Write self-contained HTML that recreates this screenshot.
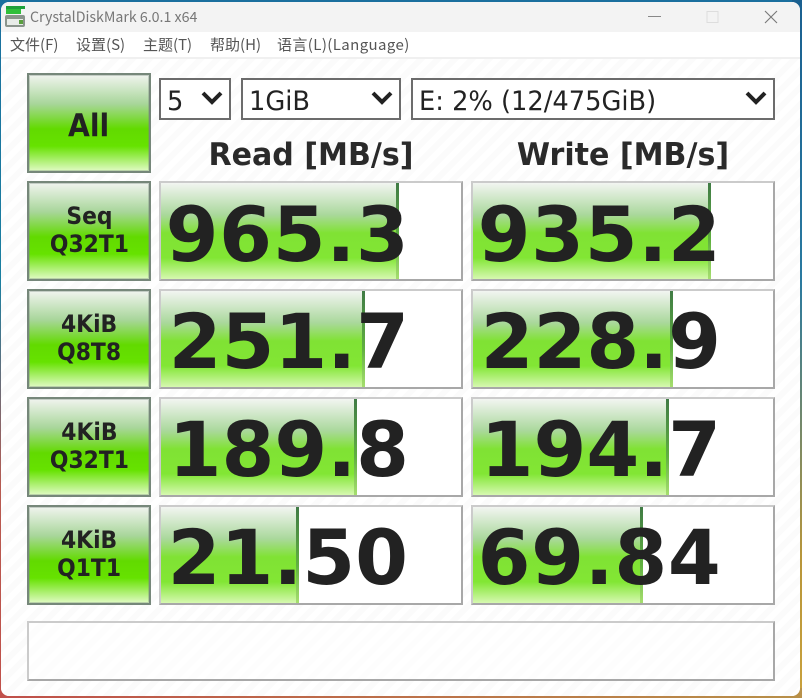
<!DOCTYPE html>
<html><head><meta charset="utf-8"><style>
html,body{margin:0;padding:0}
body{width:802px;height:698px;position:relative;overflow:hidden;background:linear-gradient(180deg,#1a6f9e 0,#1a7fa0 40%,#b85a50 70%,#c0504a 100%)}
#edgeR{position:absolute;right:0;top:0;width:10px;height:698px;background:linear-gradient(180deg,#1a6090 0,#2a7aa0 40%,#b8963a 80%,#c9a13c 100%)}
#edgeB{position:absolute;left:0;bottom:0;width:802px;height:10px;background:linear-gradient(90deg,#c0504a,#b89048)}
#win{position:absolute;left:1px;top:2px;width:799px;height:694px;border-radius:8px;overflow:hidden;background:#fdfdfd}
#tb{position:absolute;left:0;top:0;width:799px;height:30px;background:#f3f3f3}
#title{position:absolute;left:29px;top:5px;font:14.200px/20px "Noto Sans CJK SC","Liberation Sans",sans-serif;color:#777}
#menu{position:absolute;left:0;top:30px;width:799px;height:25px;background:#fff;border-bottom:2px solid #f0f0f0}
#menu span{position:absolute;top:3px;font:15px/20px "Noto Sans CJK SC","Liberation Sans",sans-serif;color:#555;white-space:nowrap}
#body{position:absolute;left:0;top:57px;width:799px;height:637px;background:repeating-linear-gradient(135deg,#fff 0 6px,#fbfbfb 6px 12px)}
.a{position:absolute;box-sizing:border-box}
.btn{background:linear-gradient(180deg,#f0f4ee 0,#a8d69a 30%,#62da00 56%,#66e200 74%,#e0fac4 100%);border:2px solid #76877a;box-shadow:inset 0 0 0 1px rgba(118,135,122,.35);text-align:center;font-family:"DejaVu Sans",sans-serif;font-weight:700;color:#222;display:flex;align-items:center;justify-content:center}
.btn span{display:block;transform:scaleX(.91)}
.sel{background:#fff;border:2px solid #6c6c6c;font:27px/38px "DejaVu Sans",sans-serif;color:#222;padding-left:6px;white-space:nowrap}
.sel span{display:inline-block;position:relative;top:3px;transform:scaleX(.952);transform-origin:0 50%}
.sel svg{position:absolute;top:10px}
.hd{font:700 31px/40px "DejaVu Sans",sans-serif;color:#2a2a2a;text-align:center;white-space:nowrap;transform:scaleX(.97)}
.m{background:#fff;width:304px;height:100px;border:2px solid;border-color:#cbcbcb #a8a8a8 #a8a8a8 #cbcbcb;overflow:hidden}
.bar{position:absolute;left:0;top:0;height:100%;background:linear-gradient(180deg,#f2f5f1 0,#aad89c 33%,#80e234 52%,#82e634 78%,#d6f8b0 100%);border-right:3px solid;border-image:linear-gradient(180deg,#3f7a45,#60b040 60%,#a8e070) 1}
.n{position:absolute;right:52px;top:9px;font:700 76px/84px "DejaVu Sans",sans-serif;color:#222;white-space:nowrap}
.w{letter-spacing:.7px;right:51.500px}
</style></head><body>
<div id="edgeR"></div><div id="edgeB"></div>
<div id="win">
<div id="tb">
<svg class="a" style="left:3px;top:3px" width="22" height="24" viewBox="0 0 22 24"><rect x="2" y="1" width="19" height="3" fill="#1fa03a"/><rect x="2" y="4" width="15" height="5" fill="#2fbf3a"/><rect x="1" y="10" width="20" height="12" rx="2" fill="#8a948c"/><rect x="3" y="14" width="16" height="6" fill="#e8ece8"/><rect x="15" y="15" width="4" height="4" fill="#5aa040"/></svg>
<div id="title">CrystalDiskMark 6.0.1 x64</div>
<svg class="a" style="left:640px;top:0" width="150" height="30" viewBox="0 0 150 30" fill="none"><path d="M7 14.500H20" stroke="#888"/><rect x="66" y="9.500" width="11" height="11" stroke="#ddd"/><path d="M124 9L136 21M136 9L124 21" stroke="#777" stroke-width="1.100"/></svg>
</div>
<div id="menu"><span style="left:9px">文件(F)</span><span style="left:75px">设置(S)</span><span style="left:142px">主题(T)</span><span style="left:209px">帮助(H)</span><span style="left:276px;letter-spacing:.4px">语言(L)(Language)</span></div>
<div id="body">
<div class="a btn" style="left:26px;top:14px;width:124px;height:100px;font-size:31px;padding-top:5px"><span>All</span></div>
<div class="a sel" style="left:158px;top:19px;width:72px;height:42px"><span>5</span><svg style="left:38px" width="26" height="18" viewBox="0 0 26 18" fill="none"><path d="M4 3L13 12L22 3" stroke="#222" stroke-width="4"/></svg></div>
<div class="a sel" style="left:240px;top:19px;width:160px;height:42px"><span>1GiB</span><svg style="left:126px" width="26" height="18" viewBox="0 0 26 18" fill="none"><path d="M4 3L13 12L22 3" stroke="#222" stroke-width="4"/></svg></div>
<div class="a sel" style="left:410px;top:19px;width:364px;height:42px"><span>E: 2% (12/475GiB)</span><svg style="left:330px" width="26" height="18" viewBox="0 0 26 18" fill="none"><path d="M4 3L13 12L22 3" stroke="#222" stroke-width="4"/></svg></div>
<div class="a hd" style="left:158px;top:76px;width:304px">Read [MB/s]</div>
<div class="a hd" style="left:470px;top:76px;width:304px">Write [MB/s]</div>

<div class="a btn" style="left:26px;top:122px;width:124px;height:100px;font-size:24px;line-height:28px;padding-bottom:2px"><span>Seq<br>Q32T1</span></div>
<div class="a btn" style="left:26px;top:230px;width:124px;height:100px;font-size:24px;line-height:28px;padding-bottom:2px"><span>4KiB<br>Q8T8</span></div>
<div class="a btn" style="left:26px;top:338px;width:124px;height:100px;font-size:24px;line-height:28px;padding-bottom:2px"><span>4KiB<br>Q32T1</span></div>
<div class="a btn" style="left:26px;top:446px;width:124px;height:100px;font-size:24px;line-height:28px;padding-bottom:2px"><span>4KiB<br>Q1T1</span></div>

<div class="a m" style="left:158px;top:122px"><div class="a bar" style="width:238px"></div><div class="n w" style="top:10px">965.3</div></div>
<div class="a m" style="left:470px;top:122px"><div class="a bar" style="width:238px"></div><div class="n w" style="top:10px">935.2</div></div>
<div class="a m" style="left:158px;top:230px"><div class="a bar" style="width:204px"></div><div class="n">251.7</div></div>
<div class="a m" style="left:470px;top:230px"><div class="a bar" style="width:200px"></div><div class="n">228.9</div></div>
<div class="a m" style="left:158px;top:338px"><div class="a bar" style="width:196px"></div><div class="n">189.8</div></div>
<div class="a m" style="left:470px;top:338px"><div class="a bar" style="width:196px"></div><div class="n">194.7</div></div>
<div class="a m" style="left:158px;top:446px"><div class="a bar" style="width:138px"></div><div class="n" style="right:53px">21.50</div></div>
<div class="a m" style="left:470px;top:446px"><div class="a bar" style="width:170px"></div><div class="n w">69.84</div></div>

<div class="a m" style="left:26px;top:562px;width:748px;height:60px;background:rgba(255,255,255,.6)"></div>
</div>
</div>
</body></html>
